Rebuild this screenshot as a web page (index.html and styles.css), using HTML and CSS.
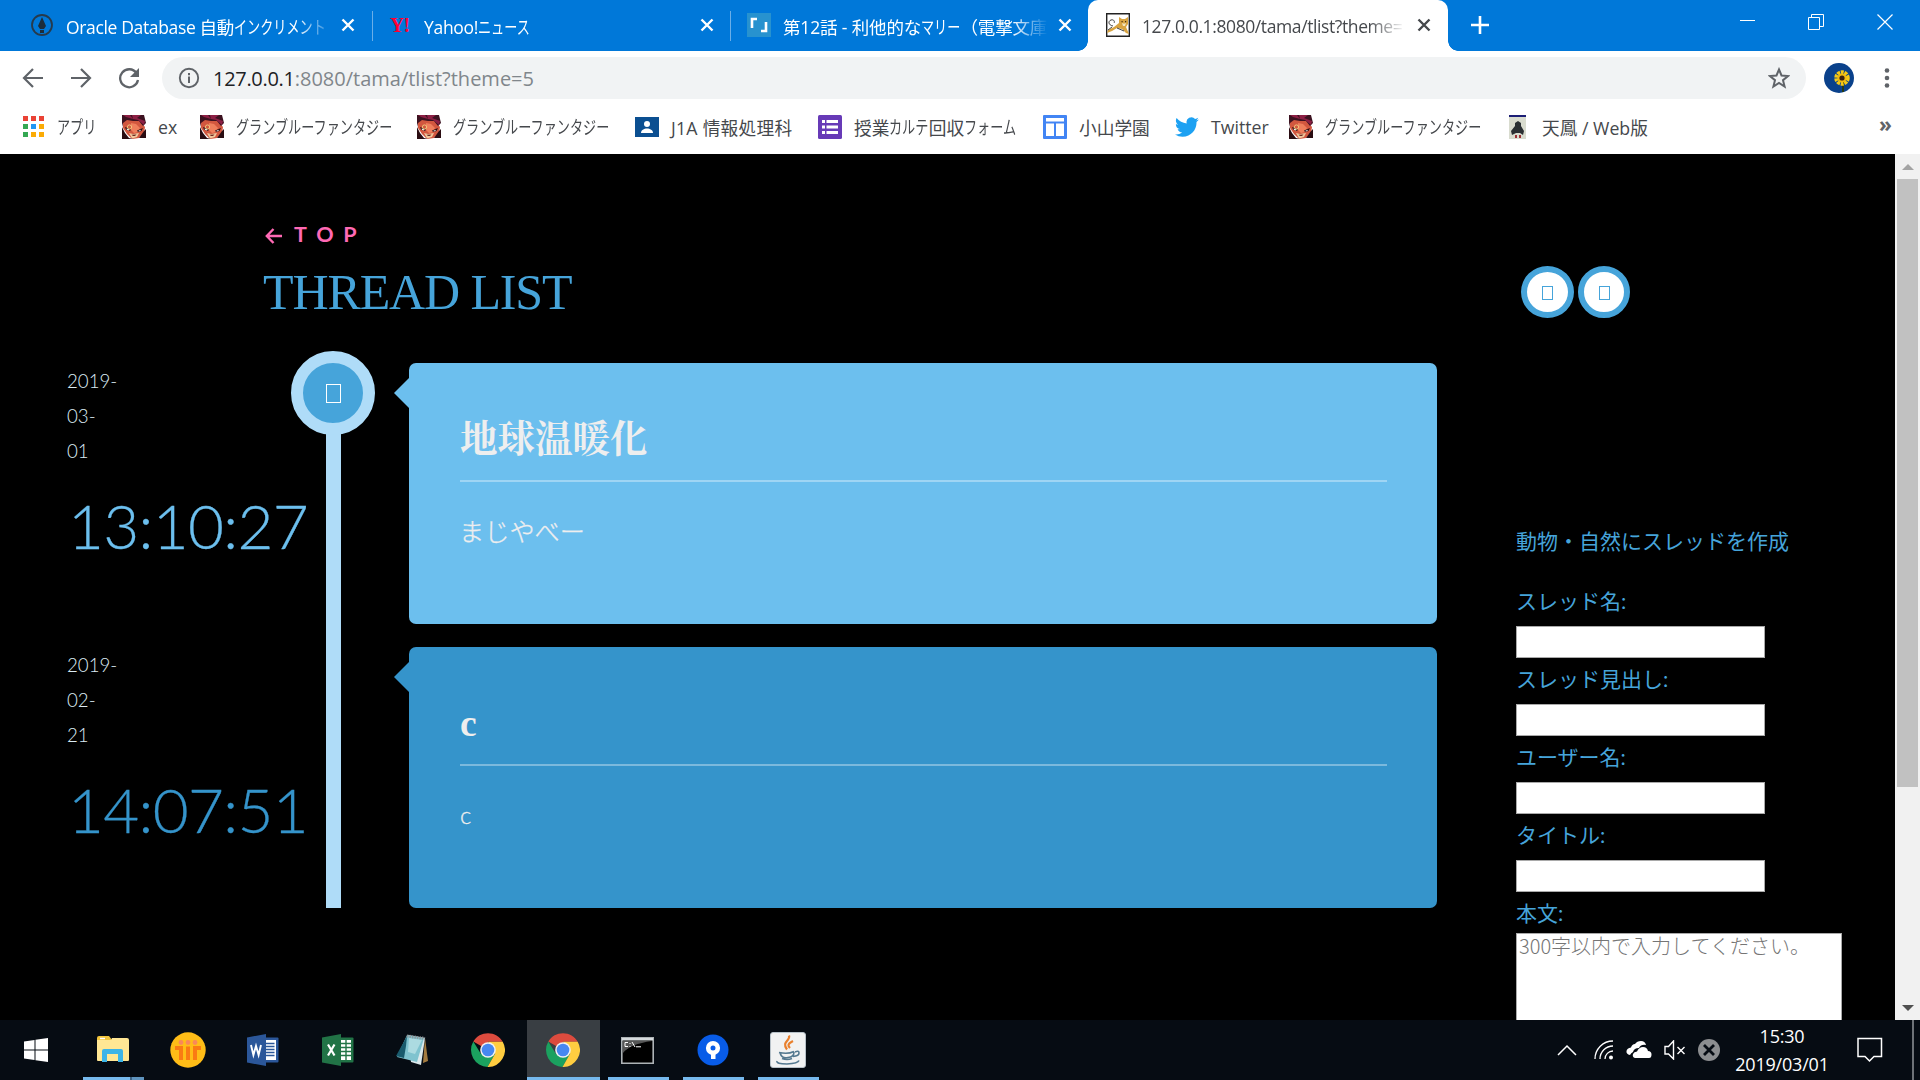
FILE: index.html
```html
<!DOCTYPE html>
<html lang="ja">
<head>
<meta charset="utf-8">
<title>THREAD LIST</title>
<link rel="stylesheet" href="styles.css">
</head>
<body>
<svg class="defs" width="0" height="0">
  <symbol id="close" viewBox="0 0 14 14"><path d="M1.500 1.500l11 11M12.500 1.500l-11 11" stroke="currentColor" stroke-width="2.400" fill="none"/></symbol>
  <symbol id="gbf" viewBox="0 0 24 24">
    <path fill="#d2573f" d="M1 6l8-3 9 3 5 6-1 6-5 5-7 1-5-5-4-6z"/>
    <path fill="#3c1220" d="M0 0h22l2 8-3 3-4-5-6 0-6-1-4 3-1 4z"/>
    <path fill="#8c1f44" d="M1 0h7l3 4-7-2zM10 0h9l-4 3 8 3-1 4-6-5-5-1z"/>
    <path fill="#ef7f5c" d="M9 8l5 1 4 4-2 4-4 1-3-3z"/>
    <path fill="#2a0d12" d="M3 12l6 2.500-1 1.500-4-1.500zM15 15.500l6-2.500-1.500 3-3.500 1zM0 12l3 6 4 5 4 1H0zM22 16l-5 7h7v-9z"/>
    <path fill="#fff" d="M4.500 13.500l3 1-.5 1-2-.8zM16.500 15.800l2.500-1-.7 1.300-1.600.5z"/>
    <path fill="#f0c79c" d="M7 18l4 1 6-1-2 4-5 1.500z"/>
    <path fill="#6d2a22" d="M9.500 19.800l5-.4-1.500 1.600h-2z"/>
    <circle cx="7.500" cy="12" r="2.100" fill="none" stroke="#f0d080" stroke-width=".9"/>
  </symbol>
  <symbol id="chrome" viewBox="0 0 34 34">
    <path fill="#dc4b3e" d="M17 17L2.300 8.500A17 17 0 0 1 31.700 8.700H17z"/>
    <path fill="#1ba15f" d="M2.300 8.500A17 17 0 0 0 16.500 34L24 21 17 17l-7 4z"/>
    <path fill="#ffcd40" d="M31.700 8.700A17 17 0 0 1 16.500 34L24.200 20.500 17 8.700z"/>
    <circle cx="17" cy="17" r="7.800" fill="#f1f1f1"/><circle cx="17" cy="17" r="6.300" fill="#4688f1"/>
  </symbol>
</svg>

<header class="tabs">
  <div class="tab tab-a">
    <svg class="fav" viewBox="0 0 24 24"><circle cx="12" cy="12" r="10" fill="none" stroke="#263a4c" stroke-width="1.800"/><path fill="#1c2d3c" d="M12 4l4 9-2 3h-4l-2-3zM10 17h4v3h-4z"/></svg>
    <span class="label">Oracle Database 自動<span class="kana" style="--n:7">インクリメント</span></span>
    <svg class="x"><use href="#close"/></svg>
  </div>
  <div class="tab tab-b">
    <b class="yahoo">Y!</b>
    <span class="label">Yahoo!<span class="kana" style="--n:4">ニュース</span></span>
    <svg class="x"><use href="#close"/></svg>
  </div>
  <div class="tab tab-c">
    <svg class="fav" viewBox="0 0 24 24"><path fill="#2792cf" d="M0 0h24v24H0z"/><path d="M5 15V6h5M19 9v9h-5" fill="none" stroke="#fff" stroke-width="2.600"/></svg>
    <span class="label">第12話 - 利他的な<span class="kana" style="--n:3">マリー</span>（電撃文庫</span>
    <svg class="x"><use href="#close"/></svg>
  </div>
  <div class="tab tab-d">
    <svg class="fav" viewBox="0 0 24 24"><path fill="#fff" stroke="#222" stroke-width="1.400" d="M.7.7h22.600v22.600H.7z"/><path fill="#d9a441" d="M13 4l3 2h3l3-2v7l-2 3 3 7-3-1-4-4-5-1-5 3-5 2 1-3 6-3 5-4z"/><path fill="none" stroke="#444" stroke-width="1" d="M7 13C2 12 2 8 5 7s4 2 3 3M6 14l-4 3M11 15l7 3"/><path fill="#f4e6c0" d="M16 10l2 .7 2-.7-1 3h-2z"/><path fill="#4a3010" d="M15.500 8h1.200v1.200h-1.200zM19 8h1.200v1.200H19z"/></svg>
    <span class="label">127.0.0.1:8080/tama/tlist?theme=</span>
    <svg class="x"><use href="#close"/></svg>
  </div>
  <svg class="plus" viewBox="0 0 18 18"><path d="M9 0v18M0 9h18" stroke="#fff" stroke-width="2.600"/></svg>
  <div class="winctl">
    <svg width="16" height="16"><path d="M1 6.500h15" stroke="#fff"/></svg>
    <svg width="16" height="16"><path d="M.5 3.500h11v12H.5zM3.500 3V.5h12v12H12" fill="none" stroke="#fff"/></svg>
    <svg width="16" height="16"><path d="M.5.5l15 15M15.500.5l-15 15" stroke="#fff" stroke-width="1.200"/></svg>
  </div>
</header>

<div class="toolbar">
  <svg class="nav" viewBox="0 0 22 22"><path d="M21 11H2M11 2l-9 9 9 9" fill="none" stroke="#5f6368" stroke-width="2.200"/></svg>
  <svg class="nav" viewBox="0 0 22 22"><path d="M1 11h19M11 2l9 9-9 9" fill="none" stroke="#5f6368" stroke-width="2.200"/></svg>
  <svg class="nav" viewBox="0 0 22 22"><path d="M18.500 6A9 9 0 1 0 20 13" fill="none" stroke="#5f6368" stroke-width="2.300"/><path fill="#5f6368" d="M21 1v9h-9z"/></svg>
  <div class="omnibox">
    <svg width="22" height="22"><circle cx="11" cy="11" r="9.200" fill="none" stroke="#5f6368" stroke-width="1.900"/><path d="M11 9.500V16M11 6v2.200" stroke="#5f6368" stroke-width="2"/></svg>
    <span class="url"><span class="host">127.0.0.1</span>:8080/tama/tlist?theme=5</span>
    <svg class="star" viewBox="0 0 22 22"><path d="M11 2.500l2.500 6 6.500.5-5 4.200 1.600 6.300L11 16l-5.600 3.500L7 13.200 2 9l6.500-.5z" fill="none" stroke="#5f6368" stroke-width="2"/></svg>
  </div>
  <svg class="avatar" viewBox="0 0 30 30"><circle cx="15" cy="15" r="15" fill="#0a418b"/><path d="M19 17v12" stroke="#263a14" stroke-width="2"/><circle cx="18" cy="15" r="5.500" fill="none" stroke="#f6c915" stroke-width="4.500" stroke-dasharray="2.700 .75"/><circle cx="18" cy="15" r="4.600" fill="#f0bb0e"/><circle cx="18" cy="15" r="2.600" fill="#3a2110"/></svg>
  <svg class="dots" width="6" height="22"><circle cx="3" cy="3.500" r="2.300"/><circle cx="3" cy="11" r="2.300"/><circle cx="3" cy="18.500" r="2.300"/></svg>
</div>

<nav class="bookmarks">
  <a class="bm w-apps"><svg class="grid" viewBox="0 0 21 21"><path fill="#ea4335" d="M0 0h5v5H0zM8 0h5v5H8zM16 0h5v5h-5z"/><path fill="#34a853" d="M0 8h5v5H0zM0 16h5v5H0z"/><path fill="#2196f3" d="M8 8h5v5H8z"/><path fill="#fbab05" d="M16 8h5v5h-5zM8 16h5v5H8zM16 16h5v5h-5z"/></svg><span class="kana" style="--n:3">アプリ</span></a>
  <a class="bm w-ex"><svg class="fav"><use href="#gbf"/></svg>ex</a>
  <a class="bm w-gbf"><svg class="fav"><use href="#gbf"/></svg><span class="kana" style="--n:12">グランブルーファンタジー</span></a>
  <a class="bm w-gbf"><svg class="fav"><use href="#gbf"/></svg><span class="kana" style="--n:12">グランブルーファンタジー</span></a>
  <a class="bm w-j1a"><svg class="fav" viewBox="0 0 24 24"><path fill="#0b4f91" d="M0 2h24v20H0z"/><circle cx="12" cy="9" r="3" fill="#fff"/><path fill="#fff" d="M6 18c0-6 12-6 12 0z"/></svg>J1A 情報処理科</a>
  <a class="bm w-form"><svg class="fav" viewBox="0 0 24 24"><rect width="24" height="24" rx="1.500" fill="#673ab7"/><path d="M4 6.500h3M4 12h3M4 17.500h3M8.500 6.500H20M8.500 12H20M8.500 17.500H20" stroke="#fff" stroke-width="3"/></svg>授業<span class="kana" style="--n:3">カルテ</span>回収<span class="kana" style="--n:4">フォーム</span></a>
  <a class="bm w-koyama"><svg class="fav" viewBox="0 0 24 24"><rect width="24" height="24" rx="1" fill="#4285f4"/><path fill="#fff" d="M3 3h18v3.500H3zM3 8.500h8V21H3zM13 8.500h8V21h-8z"/></svg>小山学園</a>
  <a class="bm w-tw"><svg class="fav" viewBox="0 0 24 24"><path fill="#1da1f2" d="M23.900 4.600a10 10 0 0 1-2.800.8 5 5 0 0 0 2.100-2.700 10 10 0 0 1-3.100 1.200 4.900 4.900 0 0 0-8.400 4.500A14 14 0 0 1 1.600 3.100a4.900 4.900 0 0 0 1.500 6.600 4.900 4.900 0 0 1-2.200-.6 4.900 4.900 0 0 0 3.900 4.900 5 5 0 0 1-2.200.1 4.900 4.900 0 0 0 4.600 3.400A9.900 9.900 0 0 1 0 19.500 14 14 0 0 0 7.500 21.700c9.100 0 14.300-7.700 14-14.600a10 10 0 0 0 2.400-2.500z"/></svg>Twitter</a>
  <a class="bm w-gbf2"><svg class="fav"><use href="#gbf"/></svg><span class="kana" style="--n:12">グランブルーファンタジー</span></a>
  <a class="bm w-ten"><svg class="ten" viewBox="0 0 17 24"><path fill="#d9dccf" d="M0 0h17v24H0z"/><path fill="#1c1e75" d="M0 0h17v2H0z"/><path fill="#2b3033" d="M6 8l3-2 3 2 0 3 3 5-1 4-3-2H7l-4 2-1-4 4-5z"/><path fill="#9c3136" d="M6 20h2v3H6zM10 20h2v3h-2z"/></svg>天鳳 / Web版</a>
  <span class="more">»</span>
</nav>

<div class="viewport">
  <main class="board">
    <div class="pagehead">
      <a class="top"><svg width="17" height="16" viewBox="0 0 17 16"><path d="M17 8H2M8.500 1L1.800 8l6.700 7" fill="none" stroke="#ff69b4" stroke-width="2.400"/></svg>TOP</a>
      <h1>THREAD LIST</h1>
    </div>
    <ul class="timeline">
      <li class="entry odd">
        <time><span>2019-</span><span>03-</span><span>01</span><b>13:10:27</b></time>
        <div class="rail"><i class="node"><i class="tofu"></i></i></div>
        <article><h2>地球温暖化</h2><p>まじやべー</p></article>
      </li>
      <li class="entry">
        <time><span>2019-</span><span>02-</span><span>21</span><b>14:07:51</b></time>
        <div class="rail"></div>
        <article><h2>c</h2><p class="latin">c</p></article>
      </li>
    </ul>
  </main>
  <aside>
    <div class="pager"><i><i class="tofu"></i></i><i><i class="tofu"></i></i></div>
    <p class="lead">動物・自然にスレッドを作成</p>
    <form>
      <label>スレッド名:</label><input type="text">
      <label>スレッド見出し:</label><input type="text">
      <label>ユーザー名:</label><input type="text">
      <label>タイトル:</label><input type="text">
      <label class="last">本文:</label><textarea placeholder="300字以内で入力してください。"></textarea>
    </form>
  </aside>
  <div class="scrollbar">
    <svg width="12" height="6"><path fill="#a3a3a3" d="M6 0l6 6H0z"/></svg>
    <div class="thumb"></div>
    <svg width="12" height="6"><path fill="#505050" d="M0 0h12L6 6z"/></svg>
  </div>
</div>

<footer class="taskbar">
  <div class="task"><svg width="24" height="24"><path fill="#fff" d="M0 3.500L10.500 2v9.500H0zM11.500 1.800L24 0v11.500H11.500zM0 12.500h10.500V22L0 20.600zM11.500 12.500H24V24l-12.500-1.800z"/></svg></div>
  <div class="task open multi"><svg width="32" height="28"><path fill="#f3c63d" d="M0 2q0-2 2-2h10l3 4H0z"/><path fill="#ffe794" d="M0 4h14l1-2h15q2 0 2 2v20q0 1-1 1H1q-1 0-1-1z"/><path fill="#3cb4e7" d="M5 26V15q0-2 2-2h17q2 0 2 2v11h-5v-8H10v8z"/><path stroke="#fff" stroke-width="1.500" d="M3 2.500h5"/></svg></div>
  <div class="task"><svg width="36" height="36"><circle cx="18" cy="18" r="17.700" fill="#ffbd17"/><g fill="none" stroke="#fa7b13" stroke-width="4"><path d="M5 16h6v12M18 14.500V28M31 16h-6v12"/></g><g fill="#f9885b"><circle cx="11" cy="10.500" r="2.400"/><circle cx="18" cy="10.500" r="2.400"/><circle cx="25" cy="10.500" r="2.400"/></g></svg></div>
  <div class="task"><svg width="32" height="32"><rect x="14" y="3.500" width="17.500" height="25" rx="1" fill="#2b579a"/><path fill="#fff" d="M19 6h10v20H19z"/><path d="M19 9.500h8.500M19 12.500h8.500M19 15.500h8.500M19 18.500h8.500M19 21.500h8.500" stroke="#2b579a" stroke-width="1.400"/><path fill="#2b579a" d="M0 3.500L19 0v32L0 28.500z"/><path d="M4 11l2.400 10L9 12l2.600 9L14 11" stroke="#fff" stroke-width="1.900" fill="none"/></svg></div>
  <div class="task"><svg width="32" height="32"><rect x="14" y="3.500" width="17.500" height="25" rx="1" fill="#217346"/><path fill="#fff" d="M19 6h10v20H19z"/><path d="M19 9.500h10M19 13.500h10M19 17.500h10M19 21.500h10M24 6v20" stroke="#217346" stroke-width="1.400"/><path fill="#217346" d="M0 3.500L19 0v32L0 28.500z"/><path d="M6 10.500l6.500 11M12.500 10.500L6 21.500" stroke="#fff" stroke-width="2.200"/></svg></div>
  <div class="task"><svg width="34" height="32"><path fill="#a37b3f" d="M30 4l3 23-5 2z"/><path fill="#dbe9ec" d="M13 1l17 3-4 27-10-3z"/><path fill="#7fc3cf" d="M12 1l17 3-7 24L2 23z"/><path fill="#195b6d" d="M12 2L1 22l8 2 2-12z"/><path fill="#acdbe1" d="M14 4l13 2-7 14-7-2z"/><path d="M12 2l18 2.500" stroke="#8d969a" stroke-width="3" stroke-dasharray="1.500 1"/></svg></div>
  <div class="task"><svg width="34" height="34"><use href="#chrome"/></svg></div>
  <div class="task open active"><svg width="34" height="34"><use href="#chrome"/></svg></div>
  <div class="task open"><svg width="33" height="27"><path fill="#000" stroke="#adb3b6" stroke-width="1.600" d="M.8.8h31.400v25.400H.8z"/><path fill="#d5dadd" d="M1 1h31v2.500H1z"/><path fill="#555" d="M2 4h29Q9 7 2 16z"/><path d="M7 5.500H4v4h3M9 6v1M9 9v1M11 5l3 5M15 9.800h5" stroke="#fff" fill="none"/></svg></div>
  <div class="task open"><svg width="32" height="32"><circle cx="16" cy="16" r="15.500" fill="#085ce8"/><circle cx="16" cy="14" r="4.800" fill="none" stroke="#fff" stroke-width="4.600"/><path fill="#fff" d="M14 18h4.500v7H14z"/></svg></div>
  <div class="task open"><svg width="36" height="36"><rect x=".5" y=".5" width="35" height="35" rx="2.500" fill="#f1f2f2" stroke="#b7c1c8"/><path d="M19 3.500c2 5-8 6-2 14M23 9c-6 3-5 5-3 7" fill="none" stroke="#e9802d" stroke-width="2.200"/><path d="M9 20.500q9 2 15-1M10 21q2 6 8 4.500 6-.5 6-5.500M25 20q4-2 4 1t-6 3.500M12 26.500q5 2 10 0M7 29q-1 3 10 3 11-.5 12-3.500" fill="none" stroke="#53788f" stroke-width="1.600"/></svg></div>
  <div class="tray">
    <svg width="20" height="12"><path d="M1 11l9-9 9 9" fill="none" stroke="#fff" stroke-width="1.500"/></svg>
    <svg width="20" height="20"><g fill="none" stroke="#fff" stroke-width="1.300"><path d="M1 19A18 18 0 0 1 19 1M6 19A13 13 0 0 1 19 6M11 19a8 8 0 0 1 8-8"/></g><circle cx="17" cy="17.500" r="2" fill="#fff"/></svg>
    <svg width="26" height="18"><path fill="#fff" d="M4 14q-4-1-3.500-4T5 6.500Q6 3 9 3q2-3 6-3 4 0 5 4-5-1-7 3-5 0-6 4-2 1-3 3z"/><path fill="#fff" d="M9 17q-3-1-2-4 1-2.500 4-2.500Q13 6 17 6q4 0 5 4 3.500 0 3.500 3.500T23 17z"/></svg>
    <svg width="22" height="20"><path d="M1 6.500h3.500L9.500 1v18l-5-5H1zM13.500 7l7 7M20.500 7l-7 7" fill="none" stroke="#fff" stroke-width="1.400"/></svg>
    <svg width="22" height="22"><circle cx="11" cy="11" r="11" fill="#8c8e90"/><path d="M6 6l10 10M16 6L6 16" stroke="#060c13" stroke-width="2.800"/></svg>
    <div class="clock"><span>15:30</span><span>2019/03/01</span></div>
    <svg width="26" height="26"><path d="M1 1.500h23.500v18h-7.500l-4.500 4.500L8 19.500H1z" fill="none" stroke="#fff" stroke-width="1.500"/></svg>
    <i class="peek"></i>
  </div>
</footer>
</body>
</html>
```
FILE: styles.css
```css
* { box-sizing: border-box; }
html, body { margin: 0; height: 100%; overflow: hidden; }
body { display: flex; flex-direction: column; width: 1920px; height: 1080px; background: #000; font-family: "Open Sans", "Noto Sans CJK JP", sans-serif; }
.defs { position: absolute; }
svg { display: block; flex: none; }
.fav { width: 24px; height: 24px; }
.kana { display: inline-block; width: calc(var(--n) * 13.120px); font-size: 18px; letter-spacing: 0; white-space: nowrap; transform: scaleX(.729); transform-origin: left; }

/* tab strip */
.tabs { display: flex; height: 51px; background: #0078d9; color: #fff; }
.tab { display: flex; align-items: center; height: 51px; padding-bottom: 1px; font-size: 17.500px; }
.tab .label { flex: 1; overflow: hidden; white-space: nowrap; margin: 1px 15px 0 12px; letter-spacing: -.3px; -webkit-mask-image: linear-gradient(to right, #000 calc(100% - 36px), transparent); mask-image: linear-gradient(to right, #000 calc(100% - 36px), transparent); }
.tab .x { width: 14px; height: 14px; }
.tab-a { width: 373px; padding-left: 30px; padding-right: 18px; }
.tab-a .label { margin-right: 8px; letter-spacing: -.35px; }
.tab-b { width: 358px; padding-left: 16px; padding-right: 17px; }
.tab-b .label { margin-left: 11px; }
.tab-a, .tab-b { background: linear-gradient(#6aaee8, #6aaee8) right 11px / 1px 30px no-repeat; }
.tab-c { width: 357px; padding-left: 16px; padding-right: 16px; border-bottom-right-radius: 10px; background: #0078d9; }
.tab-c .label { margin-right: 10px; letter-spacing: -.15px; }
.tab-d { width: 360px; padding-left: 18px; padding-right: 17px; border-radius: 10px 10px 0 0; background: #fff; color: #45484c; position: relative; }
.tab-d .label { margin-right: 12px; letter-spacing: -.4px; }
.tab-d::before, .tab-d::after { content: ""; position: absolute; bottom: 0; width: 10px; height: 10px; }
.tab-d::before { left: -10px; background: radial-gradient(circle at 0 0, transparent 9.500px, #fff 10px); }
.tab-d::after { right: -10px; background: radial-gradient(circle at 100% 0, transparent 9.500px, #fff 10px); }
.yahoo { width: 24px; padding-left: 1px; color: #ff0033; font: bold 20px/24px "Liberation Serif", serif; letter-spacing: -1px; }
.plus { width: 18px; height: 18px; margin: 16px 0 0 23px; }
.winctl { display: flex; gap: 53px; margin: 14px 27px 0 auto; }

/* toolbar */
.toolbar { display: flex; align-items: center; height: 54px; background: #fff; padding: 0 30px 0 22px; }
.nav { width: 22px; height: 22px; margin-right: 26px; }
.nav:nth-child(3) { margin-right: 22px; }
.omnibox { display: flex; align-items: center; width: 1644px; height: 42px; padding: 0 16px; border-radius: 21px; background: #f1f3f4; }
.url { flex: 1; margin-left: 13px; font-size: 20px; letter-spacing: 0; color: #80868b; white-space: nowrap; }
.host { color: #202124; letter-spacing: -.3px; }
.star { width: 22px; height: 22px; }
.avatar { width: 30px; height: 30px; margin-left: 18px; }
.dots { margin-left: 30px; fill: #5f6368; }

/* bookmarks */
.bookmarks { display: flex; align-items: center; height: 49px; padding: 0 0 5px 23px; background: #fff; color: #45484c; font-size: 17.700px; }
.bm { display: flex; align-items: center; gap: 12px; white-space: nowrap; }
.bm .kana { line-height: 24px; }
.bm svg { margin-top: -1px; }
.grid { width: 21px; height: 21px; margin-right: 1px; }
.w-apps { width: 99px; } .w-ex { width: 78px; } .w-gbf { width: 217px; }
.w-gbf + .w-gbf { width: 218px; }
.w-j1a { width: 183px; letter-spacing: .25px; } .w-form { width: 225px; gap: 0; } .w-form .fav { margin-right: 12px; }
.w-koyama { width: 132px; } .w-tw { width: 114px; } .w-gbf2 { width: 220px; }
.w-ten { gap: 16px; } .ten { width: 17px; height: 24px; }
.more { margin: -6px 28px 0 auto; font-size: 21px; font-weight: bold; color: #5f6368; }

/* page */
.viewport { display: flex; height: 866px; background: #000; overflow: hidden; }
.board { width: 1437px; font-family: Lato, "Noto Sans CJK JP", sans-serif; }
.pagehead { height: 209px; padding: 68px 0 0 264px; }
.top { display: flex; align-items: center; gap: 12px; height: 24px; color: #ff69b4; font-size: 21.500px; font-weight: 700; letter-spacing: 9.800px; }
.top svg { margin: 3px 0 0 1px; }
h1 { margin: 18px 0 0 -1px; font: 400 50px/56px "Liberation Serif", serif; letter-spacing: -1.120px; color: #46a4da; }
.timeline { margin: 0; padding: 0; list-style: none; }
.entry { display: flex; height: 284px; }
.entry:last-child { height: 261px; }
time { display: flex; flex-direction: column; width: 326px; padding-left: 67px; color: #dcebf4; font-size: 18.700px; font-weight: 300; line-height: 35px; }
time span:first-child { margin-top: 1px; }
time b { margin: 14px 0 0 1px; font-size: 62px; font-weight: 300; line-height: 84px; color: #3594cb; letter-spacing: -.7px; white-space: nowrap; -webkit-text-stroke: .3px currentColor; }
.odd time b { color: #6cbfee; }
.rail { width: 15px; background: #afdcf8; }
.node { display: flex; align-items: center; justify-content: center; width: 84px; height: 84px; margin: -12px 0 0 -35px; border: 12px solid #afdcf8; border-radius: 50%; background: #46a4da; }
.node .tofu { width: 15px; height: 19px; border: 1px solid #fff; }
article { position: relative; width: 1028px; height: 261px; margin-left: 68px; padding: 44px 50px 0 51px; border-radius: 7px; background: #3594cb; color: #eee; }
article::before { content: ""; position: absolute; left: -15px; top: 15px; border: solid transparent; border-width: 15px 15px 15px 0; border-right-color: #3594cb; }
.odd article { background: #6cbfee; }
.odd article::before { border-right-color: #6cbfee; }
h2 { height: 75px; margin: 0; padding-top: 3px; border-bottom: 2px solid rgba(255, 255, 255, .35); font: 700 37.500px/60px "Liberation Serif", "Noto Serif CJK JP", "Noto Sans CJK JP", serif; }
p { margin: 0; }
article p { margin: 30px 0 0 -1px; font-size: 25.200px; font-weight: 300; line-height: 38px; -webkit-text-stroke: .3px currentColor; }
article .latin { margin-left: 0; font-size: 24px; }

aside { width: 458px; padding: 112px 0 0 79px; color: #46a4da; font-family: Lato, "Noto Sans CJK JP", sans-serif; font-size: 21px; font-weight: 400; }
.pager { display: flex; gap: 4px; padding-left: 5px; }
.pager > i { display: flex; align-items: center; justify-content: center; width: 52px; height: 52px; border: 6px solid #46a4da; border-radius: 50%; background: #fff; }
.pager > i:first-child { width: 53px; }
.pager .tofu { width: 11px; height: 14px; margin-top: 2px; border: 1px solid #46a4da; }
.lead { margin-top: 206px; line-height: 34px; }
form { display: flex; flex-direction: column; padding-top: 22px; }
label { height: 46px; line-height: 42px; }
.last { height: 41px; }
input { width: 249px; height: 32px; padding: 0; border: 1px solid #a9a9a9; border-radius: 0; background: #fff; }
textarea { width: 326px; height: 130px; padding: 0 2px; border: 1px solid #a9a9a9; resize: none; font: 300 20px/24px "Noto Sans CJK JP", sans-serif; }
textarea::placeholder { color: #757575; }

.scrollbar { display: flex; flex-direction: column; align-items: center; width: 25px; padding: 10px 0 9px; background: #f1f1f1; }
.thumb { width: 21px; height: 608px; margin: 9px 0 auto; background: #c1c1c1; }

/* taskbar */
.taskbar { display: flex; gap: 2px; height: 60px; background: #060c13; color: #fff; }
.task { display: flex; align-items: center; justify-content: center; width: 73px; height: 60px; }
.task svg { margin-right: 2px; }
.task:first-child { margin-right: 2px; }
.task:nth-child(6) svg { margin-right: 4px; }
.open { background: linear-gradient(#76b9ed, #76b9ed) center bottom / 61px 3px no-repeat; }
.multi { background: linear-gradient(to right, #76b9ed 47px, #3f6485 47px 49px, #5f94be 49px) center bottom / 61px 3px no-repeat; }
.active { background: linear-gradient(#76b9ed, #76b9ed) center bottom / 100% 3px no-repeat, #393e43; }
.tray { display: flex; align-items: center; margin-left: auto; width: 363px; }
.tray > svg:nth-child(2) { margin-left: 17px; }
.tray > svg:nth-child(3) { margin-left: 12px; }
.tray > svg:nth-child(4) { margin-left: 12px; }
.tray > svg:nth-child(5) { margin-left: 12px; }
.clock { display: flex; flex-direction: column; align-items: center; width: 96px; margin: 0 27px 1px 14px; font-size: 18px; line-height: 28px; letter-spacing: -.2px; }
.peek { width: 2px; height: 60px; margin: 0 6px 0 auto; background: #6d7277; }
```
